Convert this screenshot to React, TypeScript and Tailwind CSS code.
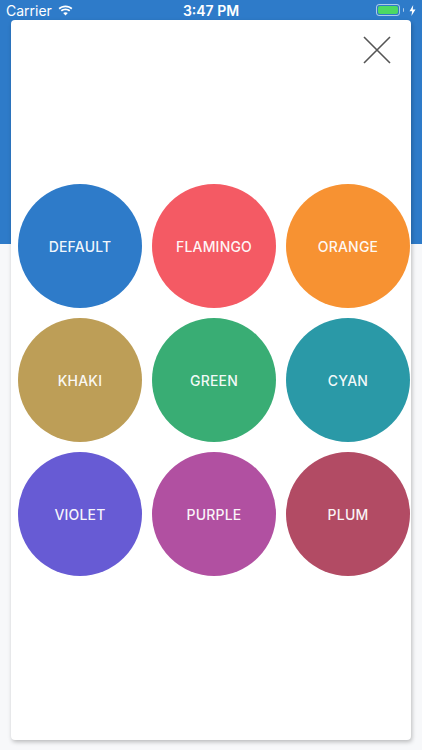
import React from "react";

const swatches: { name: string; bg: string }[] = [
  { name: "DEFAULT", bg: "bg-[#2e7bc9]" },
  { name: "FLAMINGO", bg: "bg-[#f45a64]" },
  { name: "ORANGE", bg: "bg-[#f79232]" },
  { name: "KHAKI", bg: "bg-[#bd9e57]" },
  { name: "GREEN", bg: "bg-[#39ad74]" },
  { name: "CYAN", bg: "bg-[#2a99a7]" },
  { name: "VIOLET", bg: "bg-[#675bd4]" },
  { name: "PURPLE", bg: "bg-[#b150a1]" },
  { name: "PLUM", bg: "bg-[#b24b64]" },
];

function StatusBar() {
  return (
    <div className="flex h-5 items-center justify-between px-[6px] text-[14px] text-white">
      <div className="flex items-center gap-[6px]">
        <span>Carrier</span>
        <svg width="15" height="11" viewBox="0 0 15 11" fill="white">
          <path d="M7.5 2.2c2.2 0 4.2.8 5.7 2.2l1.2-1.3C12.6 1.4 10.2.4 7.5.4S2.4 1.4.6 3.1l1.2 1.3c1.5-1.4 3.5-2.2 5.7-2.2z" />
          <path d="M7.5 5.2c1.4 0 2.6.5 3.6 1.4l1.2-1.3c-1.3-1.2-3-1.9-4.8-1.9s-3.5.7-4.8 1.9l1.2 1.3c1-.9 2.2-1.4 3.6-1.4z" />
          <path d="M7.5 10.6l2.3-2.5c-.6-.6-1.4-.9-2.3-.9s-1.7.3-2.3.9z" />
        </svg>
      </div>
      <span className="absolute left-1/2 -translate-x-1/2 font-semibold">3:47 PM</span>
      <div className="flex items-center gap-[3px]">
        <div className="flex h-[12px] w-[24px] items-center rounded-[3px] border border-white/60 p-[1px]">
          <div className="h-full w-full rounded-[2px] bg-[#4cd964]" />
        </div>
        <div className="h-[4px] w-[1.5px] rounded-r bg-white/60" />
        <svg width="7" height="11" viewBox="0 0 7 11" fill="white" className="ml-[2px]">
          <path d="M4.2 0L0.5 6.2h2.6L2.4 11l4.1-6.6H3.8z" />
        </svg>
      </div>
    </div>
  );
}

export default function App() {
  return (
    <div
      className="relative h-[750px] w-[422px] overflow-hidden bg-[#f7f8fa]"
      style={{ fontFamily: "Inter, 'Noto Sans', sans-serif" }}
    >
      <div className="absolute inset-x-0 top-0 h-[244px] bg-[#2e7bc9]" />
      <div className="relative flex h-full flex-col">
        <StatusBar />
        <div className="mx-[11px] flex h-[720px] flex-col rounded-[4px] bg-white shadow-[1px_2px_4px_rgba(0,0,0,0.25)]">
          <div className="flex h-[164px] justify-end pr-[20px] pt-[16px]">
            <svg width="28" height="28" viewBox="0 0 28 28" stroke="#555" strokeWidth="1.6" fill="none">
              <path d="M1 1L27 27M27 1L1 27" />
            </svg>
          </div>
          <div className="grid grid-cols-[124px_124px_124px] gap-[10px] pl-[7px]">
            {swatches.map((s) => (
              <div
                key={s.name}
                className={`flex h-[124px] w-[124px] items-center justify-center rounded-full ${s.bg} text-[14px] font-medium tracking-[0.2px] text-white/95`}
              >
                {s.name}
              </div>
            ))}
          </div>
        </div>
      </div>
    </div>
  );
}
